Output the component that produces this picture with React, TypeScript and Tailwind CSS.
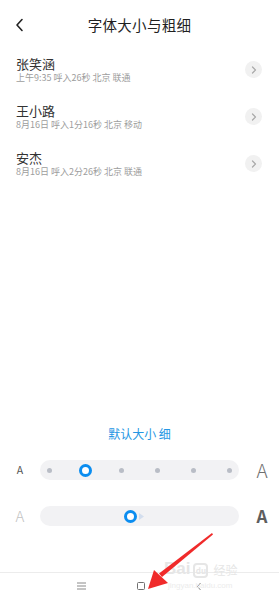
import React from "react";

const rows = [
  { name: "张笑涵", sub: "上午9:35 呼入26秒 北京 联通" },
  { name: "王小路", sub: "8月16日 呼入1分16秒 北京 移动" },
  { name: "安杰", sub: "8月16日 呼入2分26秒 北京 联通" },
];

function Chevron() {
  return (
    <div className="w-[17px] h-[17px] rounded-full bg-[#f1f1f1] flex items-center justify-center">
      <svg width="6" height="8" viewBox="0 0 6 8">
        <path d="M1.5 1 L4.5 4 L1.5 7" fill="none" stroke="#a9a9a9" strokeWidth="1.2" strokeLinecap="round" strokeLinejoin="round" />
      </svg>
    </div>
  );
}

function Ring() {
  return <div className="w-[13px] h-[13px] rounded-full border-[3.5px] border-[#0b8df0] bg-white" />;
}

export default function App() {
  const font = { fontFamily: '"Noto Sans CJK SC", "Noto Sans", sans-serif' };
  return (
    <div className="w-[279px] h-[600px] bg-white relative flex flex-col overflow-hidden" style={font}>
      {/* header */}
      <div className="h-[46px] pt-[4px] flex items-center relative shrink-0">
        <div className="w-[40px] flex justify-center">
          <svg width="10" height="14" viewBox="0 0 10 14">
            <path d="M7 1.5 L2 7 L7 12.5" fill="none" stroke="#222" strokeWidth="1.6" strokeLinecap="round" strokeLinejoin="round" />
          </svg>
        </div>
        <div className="flex-1 text-center text-[14.5px] leading-[18px] text-[#1f1f1f] pr-[40px] tracking-[0.3px]">字体大小与粗细</div>
      </div>

      {/* list */}
      <div className="shrink-0">
        {rows.map((r) => (
          <div key={r.name} className="h-[47px] flex items-center pl-[16px] pr-[17px]">
            <div className="flex-1 flex flex-col">
              <div className="text-[13px] leading-[16px] text-[#333]">{r.name}</div>
              <div className="text-[9px] leading-[12px] text-[#9d9d9d]">{r.sub}</div>
            </div>
            <Chevron />
          </div>
        ))}
      </div>

      <div className="flex-1" />

      {/* settings */}
      <div className="shrink-0 flex flex-col">
        <div className="h-[16px] text-center text-[12px] leading-[16px] text-[#2596e3]">默认大小 细</div>
        <div className="mt-[18px] h-[20px] flex items-center">
          <div className="w-[40px] text-center text-[10.5px] leading-[12px] text-[#555]">A</div>
          <div className="w-[199px] h-[20px] rounded-full bg-[#f2f2f4] flex items-center justify-between pl-[2px] pr-[3px]">
            {[0, 1, 2, 3, 4, 5].map((i) => (
              <div key={i} className="w-[14px] flex justify-center">
                {i === 1 ? <Ring /> : <div className="w-[5px] h-[5px] rounded-full bg-[#b9bdc6]" />}
              </div>
            ))}
          </div>
          <div className="w-[40px] pl-[6px] text-center text-[19px] leading-[20px] font-light text-[#707070]">A</div>
        </div>
        <div className="mt-[26px] h-[20px] flex items-center">
          <div className="w-[40px] text-center text-[15px] leading-[18px] font-light text-[#c2c2c2]">A</div>
          <div className="w-[199px] h-[20px] rounded-full bg-[#f2f2f4] relative">
            <div className="absolute left-[84px] top-[3.5px]">
              <Ring />
            </div>
            <svg className="absolute left-[99px] top-[6.5px]" width="5" height="7" viewBox="0 0 5 7">
              <path d="M0 0 L5 3.5 L0 7 Z" fill="#d3deee" />
            </svg>
          </div>
          <div className="w-[40px] pl-[6px] text-center text-[17px] leading-[20px] font-bold text-[#5e5e5e]">A</div>
        </div>
        <div className="h-[46px]" />
      </div>

      {/* nav */}
      <div className="h-[28px] shrink-0 border-t border-[#ececec] flex items-center justify-center gap-[51px] pb-[1px]">
        <svg width="9" height="8" viewBox="0 0 9 8">
          <path d="M0 1 H9 M0 4 H9 M0 7 H9" stroke="#8a8a8a" strokeWidth="1" />
        </svg>
        <div className="w-[8px] h-[8px] border border-[#707070] rounded-[1.5px]" />
        <svg width="6" height="9" viewBox="0 0 6 9">
          <path d="M4.5 1 L1.5 4.5 L4.5 8" fill="none" stroke="#8a8a8a" strokeWidth="1" />
        </svg>
      </div>

      {/* watermark */}
      <div className="absolute left-[164px] top-[560px] flex items-end gap-[3px] pointer-events-none">
        <span className="text-[17px] leading-[18px] font-bold text-[#e6e6e6]" style={{ fontFamily: '"Liberation Sans", sans-serif' }}>Bai</span>
        <span className="w-[15px] h-[15px] rounded-[4px] border-2 border-[#e6e6e6] text-[8px] leading-[11px] text-center text-[#e6e6e6] font-bold">du</span>
        <span className="text-[12px] leading-[16px] text-[#e6e6e6] ml-[2px]">经验</span>
      </div>
      <div className="absolute left-[168px] top-[581px] text-[8px] leading-[10px] text-[#ececec] pointer-events-none" style={{ fontFamily: '"Liberation Sans", sans-serif' }}>
        jingyan.baidu.com
      </div>

      {/* red arrow */}
      <svg className="absolute left-0 top-0 pointer-events-none" width="279" height="600" viewBox="0 0 279 600">
        <path d="M212 533 L213 534.5 L162 577 L159 573.5 Z" fill="#f02a2a" />
        <path d="M148 589 L154 570 L168 583 Z" fill="#f02a2a" />
      </svg>
    </div>
  );
}
